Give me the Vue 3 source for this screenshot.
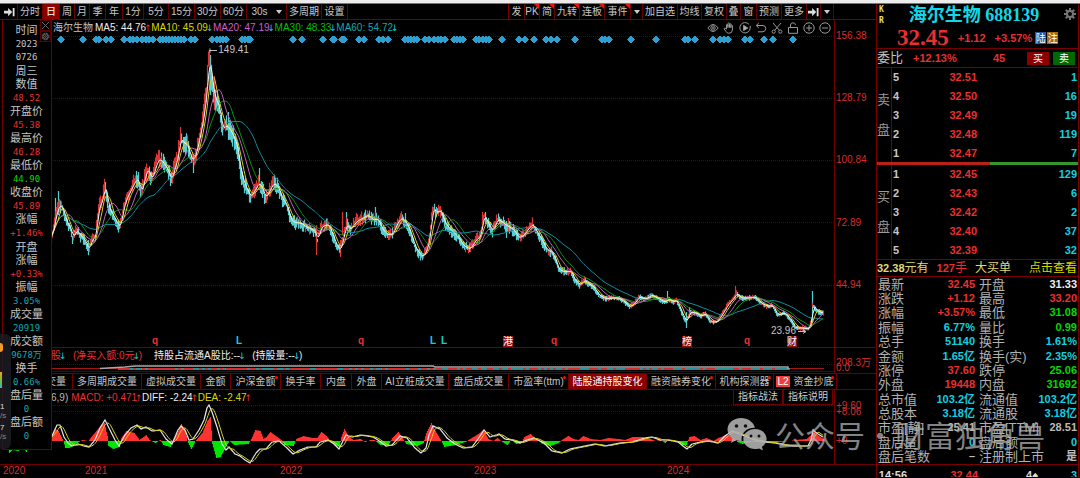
<script setup>
const X0 = 2
const SPAN = 832

const periods = [
  { t: '分时' }, { t: '日', on: true }, { t: '周' }, { t: '月' }, { t: '季' }, { t: '年' },
  { t: '1分' }, { t: '5分' }, { t: '15分' }, { t: '30分' }, { t: '60分' }, { t: '30s', caret: true },
  { t: '多周期' }, { t: '设置' },
]
const actions = [
  { t: '发' }, { t: 'PK', hot: true }, { t: '简', hot: true }, { t: '九转', hot: true },
  { t: '连板', hot: true }, { t: '事件', hot: true }, { t: '', caret: true }, { t: '加自选' },
  { t: '均线' }, { t: '复权' }, { t: '叠' }, { t: '窗' }, { t: '预测' }, { t: '更多' },
  { t: '', jump: true }, { t: '', caret: true },
]
const averages = [
  { t: 'MA5: 44.76', c: 'white', up: true }, { t: 'MA10: 45.09', c: 'yellow' },
  { t: 'MA20: 47.19', c: 'violet' }, { t: 'MA30: 48.33', c: 'green' }, { t: 'MA60: 54.72', c: 'teal' },
]
const tabs = [
  { t: '成交量' }, { t: '多周期成交量' }, { t: '虚拟成交量' }, { t: '金额' }, { t: '沪深金额', dot: true },
  { t: '换手率' }, { t: '内盘' }, { t: '外盘' }, { t: 'AI立桩成交量' }, { t: '盘后成交量' },
  { t: '市盈率(ttm)', dot: true }, { t: '陆股通持股变化', on: true }, { t: '融资融券变化', dot: true },
  { t: '机构探测器', dot: true }, { t: '资金抄底', dot: true, l2: true },
]
const side = [
  ['时间', ''], ['2023', 'n'], ['0726', 'n'], ['周三', ''], ['数值', ''], ['48.52', 'n red'],
  ['开盘价', ''], ['45.38', 'n red'], ['最高价', ''], ['46.28', 'n red'], ['最低价', ''], ['44.90', 'n lime'],
  ['收盘价', ''], ['45.89', 'n red'], ['涨幅', ''], ['+1.46%', 'n red'], ['开盘', ''], ['涨幅', ''],
  ['+0.33%', 'n red'], ['振幅', ''], ['3.05%', 'n teal'], ['成交量', ''], ['20919', 'n teal'],
  ['成交额', ''], ['9678万', 'n teal'], ['换手', ''], ['0.66%', 'n teal'], ['盘后量', ''], ['0', 'n teal'],
  ['盘后额', ''], ['0', 'n teal'],
]
const asks = [['5', '32.51', '1'], ['4', '32.50', '16'], ['3', '32.49', '19'], ['2', '32.48', '119'], ['1', '32.47', '7']]
const bids = [['1', '32.45', '129'], ['2', '32.43', '6'], ['3', '32.42', '2'], ['4', '32.40', '37'], ['5', '32.39', '32']]
const quote = [
  ['最新', '32.45', 'red', '开盘', '31.33', 'white'],
  ['涨跌', '+1.12', 'red', '最高', '33.20', 'red'],
  ['涨幅', '+3.57%', 'red', '最低', '31.08', 'lime'],
  ['振幅', '6.77%', 'cyan', '量比', '0.99', 'lime'],
  ['总手', '51140', 'cyan', '换手', '1.61%', 'cyan'],
  ['金额', '1.65亿', 'cyan', '换手(实)', '2.35%', 'cyan'],
  ['涨停', '37.60', 'red', '跌停', '25.06', 'lime'],
  ['外盘', '19448', 'red', '内盘', '31692', 'lime'],
  ['总市值', '103.2亿', 'cyan', '流通值', '103.2亿', 'cyan'],
  ['总股本', '3.18亿', 'cyan', '流通股', '3.18亿', 'cyan'],
  ['市盈[静]', '25.41', 'grey', '市盈[TTM]', '28.51', 'grey'],
  ['盘后量', '0', 'cyan', '盘后额', '0', 'cyan'],
  ['盘后笔数', '–', 'grey', '注册制上市', '是', 'grey'],
]
const marks = [
  [155, 'q', 'red'], [239, 'L', 'cyan'], [361, 'q', 'red'], [433, 'L', 'cyan'], [444, 'L', 'cyan'],
  [508, '港', 'tag'], [554, 'q', 'red'], [687, '榜', 'tag'], [747, 'q', 'red'], [792, '财', 'tag'],
]
const years = [[3, '2020'], [85, '2021'], [280, '2022'], [474, '2023'], [667, '2024']]
const priceLabels = [[36, '156.38'], [98, '128.79'], [160, '100.84'], [223, '72.89'], [285, '44.94']]

const pct = (x) => ((x - X0) / SPAN) * 100 + '%'

const pairs = (s) => s.trim().split(/\s+/).map((p) => p.split(',').map(Number))
const sample = (pts, from, to) => {
  const out = []
  let k = 0
  for (let x = from; x <= to; x++) {
    while (k < pts.length - 2 && pts[k + 1][0] < x) k++
    const [a, b] = pts[k]
    const [c, d] = pts[k + 1]
    const f = Math.min(1, Math.max(0, (x - a) / (c - a)))
    out.push([x, b + (d - b) * f])
  }
  return out
}
const smooth = (s, n) => s.map(([x], i) => {
  const w = s.slice(Math.max(0, i - n + 1), i + 1)
  return [x, w.reduce((t, p) => t + p[1], 0) / w.length]
})
const line = (s) => s.map((p) => p[0] + ',' + p[1].toFixed(1)).join(' ')

const closes = sample(pairs(`51,238 54,222 57,208 61,205 63,212 67,225 70,228 72,238 76,230 80,236 84,240
 88,250 91,240 95,236 97,215 99,205 102,200 104,185 106,193 108,208 112,215 116,222 119,228 122,212 125,200
 130,190 135,180 138,180 140,192 143,185 145,172 148,170 151,180 154,170 157,160 160,160 164,165 168,172
 171,181 173,170 176,162 180,138 183,143 187,145 190,158 193,160 196,150 200,132 203,115 206,90 208,65 209,58
 211,78 214,98 218,105 222,130 225,125 228,128 232,135 236,145 239,163 240,172 244,185 250,197 254,190 258,183
 261,187 265,198 270,188 273,183 278,188 281,198 286,205 290,220 295,223 300,223 305,227 310,229 314,231
 317,240 320,228 324,225 328,225 332,235 336,246 340,250 343,235 346,224 350,230 354,223 358,220 362,218
 367,215 372,220 377,219 382,230 387,235 392,234 397,222 401,218 405,222 409,230 414,246 418,253 422,257
 426,250 429,238 431,215 433,209 437,213 440,210 444,223 450,230 457,237 463,246 469,249 475,240 480,236
 482,220 484,216 488,225 492,231 497,219 502,223 508,227 513,230 518,238 523,235 528,228 532,224 536,232
 541,240 546,250 551,252 555,260 558,270 565,272 570,271 574,280 579,285 584,280 588,284 593,287 598,295
 605,299 610,298 618,298 625,303 629,307 634,303 638,297 645,299 651,295 658,299 664,302 668,299 673,302
 676,300 680,310 683,317 686,322 689,312 695,313 700,316 705,314 710,322 716,322 721,315 727,305 733,298
 736,293 740,298 748,298 754,297 760,303 766,306 772,306 777,315 784,313 790,320 795,328 802,328 808,329
 811,320 812,305 814,308 818,312 823,313`), 51, 823)

let seed = 7
const rnd = () => {
  seed = (seed * 16807) % 2147483647
  return seed / 2147483647
}
let rise = ''
let fall = ''
closes.forEach(([x, y], i) => {
  const amp = 2 + Math.max(0, 300 - y) * 0.055
  const slope = i ? y - closes[i - 1][1] : 0
  const bar = `M${x + 0.5} ${(y - amp * rnd() - 1).toFixed(1)}V${(y + amp * rnd() + 1).toFixed(1)}`
  if (slope + (rnd() - 0.5) * 2 < 0) rise += bar
  else fall += bar
})
rise += 'M209.5 50V90M104.5 182V200M145.5 167V180M180.5 127V150M214.5 76V110M316.5 225V255M340.5 240V257M342.5 212V235M356.5 213V225M259.5 181V190M482.5 212V230M735.5 286V300M161.5 156V165M508.5 218V232'
fall += 'M210.5 62V95M55.5 198V225M58.5 191V215M88.5 240V254M228.5 112V140M259.5 168V190M275.5 178V192M346.5 212V230M375.5 207V222M405.5 213V225M667.5 291V303M686.5 312V328M689.5 307V318M812.5 291V322M193.5 155V173M506.5 221V238'

const ma = [
  { c: '#0a8f9e', n: 48 }, { c: '#0a920a', n: 24 }, { c: '#bd62bd', n: 16 }, { c: '#d6cf20', n: 8 }, { c: '#f2f2f2', n: 4 },
].map((m) => ({ c: m.c, p: line(smooth(closes, m.n)) }))

const diffSeries = sample(pairs(`51,438 57,425 60,425 64,437 68,443 72,446 78,444 84,446 89,447 95,440 100,428
 105,420 110,430 115,440 119,446 125,435 131,428 137,425 141,429 146,427 152,431 160,430 166,439 172,444
 178,430 181,426 185,430 189,440 193,439 199,430 204,420 207,408 209,405 212,412 217,427 222,444 226,450
 229,447 235,454 240,456 245,460 250,463 256,453 260,449 266,449 272,442 279,441 287,448 293,454 300,450
 308,447 316,447 320,442 328,440 334,444 339,449 346,435 352,437 360,435 367,436 373,437 378,440 386,446
 392,445 400,436 407,438 415,448 421,453 426,448 429,435 433,426 440,429 447,438 455,444 463,448 472,447
 478,439 484,430 490,437 499,434 505,439 512,440 520,443 527,440 534,438 544,443 552,451 562,453 570,449
 585,446 595,444 605,446 620,443 632,442 645,438 652,437 660,440 668,440 678,442 683,446 687,449 692,444
 700,442 708,441 718,443 725,436 732,431 737,433 745,436 755,440 765,442 775,443 785,445 795,446 808,446
 811,440 813,430 818,434 823,437`), 51, 823)
const diff = line(diffSeries)
const dea = line(smooth(diffSeries, 7))

const histSeries = sample(pairs(`8,0 9,-12 12,-9 18,-10 22,-6 26,-11 28,-3 30,0 50,0 51,5 55,12 58,10 63,0 65,-7
 69,-7 75,-3 82,1 88,0 91,4 96,10 101,16 104,18 107,5 108,-5 113,-8 119,-6 121,3 126,10 134,8 139,1 146,6
 149,1 155,-2 160,1 163,-4 170,-6 174,3 178,10 181,17 185,10 187,0 191,-8 195,0 202,8 207,20 210,24 212,-3
 216,-17 220,-16 226,-5 229,0 234,-4 248,-3 251,2 255,11 260,10 263,2 266,4 270,9 274,6 281,1 284,-4 293,-5
 296,2 303,5 312,3 317,3 321,9 326,5 330,0 334,-4 339,-6 341,4 344,12 348,5 353,1 360,2 365,-1 370,1 374,1
 380,-4 388,-4 392,3 398,9 402,3 406,-3 417,-5 423,-2 426,8 431,18 435,10 441,0 444,-6 455,-4 465,-1 473,4
 478,7 483,11 488,2 493,0 497,3 502,-1 507,-4 511,1 516,-3 521,-2 524,4 530,7 536,2 542,-3 550,-5 558,-2
 563,2 568,5 573,2 578,1 583,5 590,2 600,1 608,3 618,2 625,1 632,4 642,4 650,2 655,0 660,1 665,-2 668,1
 675,0 682,-4 686,-4 689,4 694,5 700,1 706,3 713,0 718,3 726,6 732,4 737,-1 742,-3 750,-1 775,-1 790,0
 795,1 806,2 811,6 813,12 817,6 823,2`), 8, 823)
const bars = (sign) => histSeries.filter((p) => p[1] * sign > 0.3)
  .map((p) => `M${p[0] + 0.5} 441V${(441 - p[1]).toFixed(1)}`).join('')
const histUp = bars(1)
const histDown = bars(-1)

let flowRed = ''
let flowTeal = ''
for (let x = 118; x < 788; x += 3) {
  const s = `M${x} 369h3`
  if (rnd() > 0.45) flowRed += s
  else flowTeal += s
}

const diamonds = [61, 83, 96, 99, 106, 111, 124, 130, 133, 137, 142, 146, 149, 153, 160, 163, 166, 169, 172, 175,
  178, 181, 184, 191, 195, 212, 217, 220, 223, 226, 242, 245, 248, 250, 293, 302, 323, 333, 334, 342, 344, 359, 364,
  379, 383, 388, 405, 408, 411, 414, 417, 425, 429, 434, 438, 441, 445, 454, 457, 460, 463, 476, 479, 483, 486, 489,
  502, 519, 525, 534, 546, 551, 557, 575, 602, 605, 609, 631, 656, 685, 688, 695, 713, 720, 724, 728, 745, 750, 764,
  773, 793].map((x) => `M${x} 36l3.5 3.5l-3.5 3.5l-3.5 -3.5z`).join('')
</script>

<template>
  <div class="app">
    <div class="strip"></div>
    <div class="body">
      <main class="left">
        <nav class="toolbar">
          <div class="periods">
            <button class="tool" aria-label="展开">
              <svg class="jump" viewBox="0 0 12 10"><path d="M0 3.500h4.500V.5l4.500 4.500-4.500 4.500V6.500H0zM9.500 .5h2v9H9.500z" /></svg>
            </button>
            <button v-for="p in periods" :key="p.t" class="tool" :class="{ on: p.on }">
              {{ p.t }}<i v-if="p.caret" class="caret wide"></i>
            </button>
          </div>
          <div class="actions">
            <button v-for="(a, i) in actions" :key="i" class="tool" :class="{ hot: a.hot }">
              {{ a.t }}<i v-if="a.caret" class="caret"></i>
              <svg v-if="a.jump" class="jump" viewBox="0 0 12 10"><path d="M0 3.500h4.500V.5l4.500 4.500-4.500 4.500V6.500H0zM9.500 .5h2v9H9.500z" /></svg>
            </button>
          </div>
        </nav>

        <div class="work">
          <section class="band price">
            <div class="plot">
              <svg class="canvas" viewBox="2 20 832 327" preserveAspectRatio="none">
                <path d="M51 36.500H834M51 98.500H834M51 160.500H834M51 222.500H834M51 285.500H834" class="grid" />
                <path :d="diamonds" fill="#2f9fd0" stroke="#2f9fd0" stroke-linejoin="round" />
                <path :d="fall" stroke="#5fe4e8" stroke-width="1.200" stroke-opacity=".9" />
                <path :d="rise" stroke="#f23a3a" stroke-width="1.200" stroke-opacity=".9" />
                <polyline v-for="m in ma" :key="m.c" :points="m.p" :stroke="m.c" fill="none" />
                <path d="M209 50.500H217M210 48.500v4M798 331.500h8m-3 -2l3 2l-3 2" stroke="#bbb" fill="none" />
              </svg>
              <div class="legend">
                <span class="name">海尔生物</span>
                <span v-for="m in averages" :key="m.t" :class="m.c">{{ m.t }}<b class="arrow" :class="m.up ? 'red' : 'cyan'">{{ m.up ? '↑' : '↓' }}</b></span>
              </div>
              <div class="icons">
                <svg viewBox="0 0 12 12"><path d="M.8 6q5.200-7 10.400 0q-5.200 7-10.400 0z" /><circle cx="6" cy="6" r="2.200" /><circle cx="6" cy="6" r=".6" /></svg>
                <svg viewBox="0 0 12 12"><path d="M3.500 7V2.800q.7-1 1.400 0V5.500V1.500q.7-1 1.500 0V5.500V2q.7-1 1.500 0V5.800V3.500q.8-.9 1.500 0V8q-.2 3.300-3.500 3.300Q4 11.300 3 9.500L1 6.700q.3-1.100 1.400-.4z" /></svg>
                <svg viewBox="0 0 12 12"><path d="M9.800 2.200A5.200 5.200 0 1 0 11.200 6M11.200 6V3.800" /><path d="M4.600 3.400L8.800 6L4.600 8.600z" fill="#b0b0b0" /></svg>
                <svg viewBox="0 0 12 12"><path d="M3.800 1L1.200 3.500L3.800 6M1.200 3.500H8Q10.800 3.800 10.800 6.500T8 9.800H3" /></svg>
                <svg viewBox="0 0 12 12"><path d="M2 1L8.500 8.500M10 1L3.500 8.500" /><circle cx="2.700" cy="9.600" r="1.600" /><circle cx="9.300" cy="9.600" r="1.600" /></svg>
                <svg viewBox="0 0 12 12"><path d="M1.500 5.500H10.500V11.300H1.500zM3.500 5.500V3Q3.800.8 6 .8T8.500 3" /></svg>
                <svg viewBox="0 0 12 12"><circle cx="6" cy="6" r="5.200" /><path d="M3 6H9M6 3V9" /></svg>
                <svg viewBox="0 0 12 12"><circle cx="6" cy="6" r="5.200" /><path d="M3 6H9" /></svg>
              </div>
              <span class="note peak">149.41</span>
              <span class="note trough">23.96</span>
              <span v-for="m in marks" :key="m[0]" class="mark" :class="m[2]" :style="{ left: pct(m[0]) }">{{ m[1] }}</span>
            </div>
            <div class="axis">
              <span v-for="l in priceLabels" :key="l[1]" :style="{ top: l[0] - 20 + 'px' }">{{ l[1] }}</span>
            </div>
          </section>

          <section class="band flow">
            <div class="plot">
              <div class="caption">
                <span class="red">股<b class="cyan">↓</b></span>
                <span class="red net">(净买入额:0元<b class="cyan">↓</b>)</span>
                <span class="white">持股占流通A股比:--<b class="cyan">↓</b></span>
                <span class="white">(持股量:--<b class="cyan">↓</b>)</span>
              </div>
              <svg class="canvas" viewBox="2 348 832 25" preserveAspectRatio="none">
                <path d="M51 364.500H834" class="grid" />
                <path d="M51 368.500H118M788 368.500H824" stroke="#a51818" />
                <path :d="flowRed" stroke="#d03030" stroke-width="2" />
                <path :d="flowTeal" stroke="#2f8f96" stroke-width="2" />
                <path d="M100 368.500L125 367L135 366H433L435 367H788V369" stroke="#a9a9a9" stroke-width="1.500" fill="none" />
                <path d="M51 371.500H834" stroke="#5c0000" />
              </svg>
            </div>
            <div class="axis"><span class="flow-top">208.3万</span><span class="flow-zero">0.0</span></div>
          </section>

          <div class="tabs">
            <button v-for="t in tabs" :key="t.t" class="tab" :class="{ on: t.on, dot: t.dot }">
              <em v-if="t.l2">L2</em>{{ t.t }}
            </button>
          </div>

          <section class="band macd">
            <div class="plot">
              <svg class="canvas" viewBox="2 390 832 74" preserveAspectRatio="none">
                <path d="M51 405.500H834M51 411.500H834" class="grid" />
                <path :d="histUp" stroke="#ff3232" stroke-width="1.200" />
                <path :d="histDown" stroke="#00e600" stroke-width="1.200" />
                <polyline :points="diff" stroke="#e8e8e8" fill="none" stroke-width="1.200" />
                <polyline :points="dea" stroke="#d8d020" fill="none" />
              </svg>
              <div class="caption macd-text">
                <span class="grey">6,9)</span>
                <span class="red">MACD: +0.471<b class="arrow">↑</b></span>
                <span class="white">DIFF: -2.24<b class="arrow red">↑</b></span>
                <span class="yellow">DEA: -2.47<b class="arrow red">↑</b></span>
              </div>
              <div class="helpers"><button>指标战法</button><button>指标说明</button></div>
            </div>
            <div class="axis">
              <span class="m1">+9.60</span><span class="m2">+8.06</span><span class="m3">+0</span>
            </div>
          </section>

          <div class="years">
            <span v-for="y in years" :key="y[1]" :style="{ left: pct(y[0]) }">{{ y[1] }}</span>
          </div>

          <aside class="side">
            <span v-for="(s, i) in side" :key="i" :class="s[1]">{{ s[0] }}</span>
            <div class="side-tools">
              <button aria-label="关闭"><svg viewBox="0 0 10 10"><path d="M1 1L9 9M9 1L1 9" /></svg></button>
              <button aria-label="设置"><svg viewBox="0 0 10 10"><circle cx="5" cy="5" r="3.800" stroke-dasharray="2 1" /><circle cx="5" cy="5" r="2.800" /><circle cx="5" cy="5" r="1" /></svg></button>
            </div>
          </aside>
          <div class="dock">
            <i class="orange"></i><i class="rainbow"></i><span>1</span><span class="dim">/s</span><span>7</span><span class="dim">/s</span>
          </div>
        </div>
      </main>

      <aside class="panel">
        <header class="head">
          <div class="title-row">
            <div class="kr"><span>K</span><span>R</span></div>
            <h1>海尔生物 688139</h1>
            <button class="gear" aria-label="设置">
              <svg viewBox="0 0 12 12"><circle cx="6" cy="6" r="3" fill="none" stroke="#777" stroke-width="2" /><path d="M6 0v2.500M6 9.500V12M0 6h2.500M9.500 6H12M1.800 1.800l1.700 1.700M8.500 8.500l1.700 1.700M10.200 1.800L8.500 3.500M3.500 8.500l-1.700 1.700" stroke="#777" stroke-width="2" /></svg>
            </button>
          </div>
          <div class="last red"><strong>32.45</strong><b>+1.12</b><b>+3.57%</b><i class="chip blue">陆</i><i class="chip amber">注</i></div>
        </header>
        <div class="ratio">
          <span class="label">委比</span><b class="red">+12.13%</b><b class="red">45</b>
          <button class="buy">买</button><button class="sell">卖</button>
        </div>
        <div class="book">
          <div class="book-side"><span>卖</span><span>盘</span></div>
          <table><tbody><tr v-for="r in asks" :key="r[0]"><th>{{ r[0] }}</th><td class="red">{{ r[1] }}</td><td class="cyan">{{ r[2] }}</td></tr></tbody></table>
        </div>
        <div class="split"><i></i><i></i></div>
        <div class="book">
          <div class="book-side"><span>买</span><span>盘</span></div>
          <table><tbody><tr v-for="r in bids" :key="r[0]"><th>{{ r[0] }}</th><td class="red">{{ r[1] }}</td><td class="cyan">{{ r[2] }}</td></tr></tbody></table>
        </div>
        <div class="alert">
          <span><b>32.38</b>元有</span><span class="red"><b>127</b>手</span><span>大买单</span><a href="#">点击查看</a>
        </div>
        <table class="quote">
          <tbody>
            <tr v-for="q in quote" :key="q[0]">
              <th>{{ q[0] }}</th><td :class="q[2]">{{ q[1] }}</td><th>{{ q[3] }}</th><td :class="q[5]">{{ q[4] }}</td>
            </tr>
          </tbody>
        </table>
        <div class="ticks"><b>14:56</b><b class="red">32.44</b><b>4♠</b><b class="cyan">3</b></div>
      </aside>
    </div>

    <div class="watermark">
      <svg viewBox="0 0 40 34">
        <path d="M14 1C6.500 1 .5 6 .5 12.500c0 3.600 1.900 6.700 4.900 8.800L4 26l5-2.800c1.500.5 3 .7 4.700.7h1C13.500 16 20 10.500 28 10.800C26.500 5 21 1 14 1z" />
        <path d="M28 12c-6.600 0-11.700 4.400-11.700 10S21.400 32 28 32c1.400 0 2.800-.2 4-.6L36 33.500l-1.100-3.700C37.800 27.900 39.600 25 39.600 22c0-5.600-5-10-11.600-10z" />
        <g fill="#111"><circle cx="9.500" cy="9" r="1.800" /><circle cx="18.500" cy="9" r="1.800" /><circle cx="24" cy="19" r="1.500" /><circle cx="32" cy="19" r="1.500" /></g>
      </svg>
      <span>公众号</span><span class="point">·</span><span>财富独角兽</span>
    </div>
  </div>
</template>

<style>
body { margin: 0; background: #000; }
</style>

<style scoped>
.app { position: relative; overflow: hidden; background: #000; color: #c4c4c4; font: 10px/12px "Liberation Sans", "Noto Sans CJK SC", sans-serif; }
button { margin: 0; padding: 0; border: 0; background: none; color: inherit; font: inherit; white-space: nowrap; }
.strip { height: 3px; background: #ececec; border-bottom: 1px solid #777; }
.body { display: flex; }
.left { flex: 1; min-width: 0; }
.red { color: #e83030; }
.lime { color: #00d800; }
.green { color: #00c000; }
.cyan { color: #10d0e0; }
.teal { color: #10a8b0; }
.white { color: #eee; }
.grey { color: #bbb; }
.yellow { color: #d8d800; }
.violet { color: #c95fd0; }

.toolbar { display: flex; justify-content: space-between; height: 15px; padding: 0 42px 0 2px; border-bottom: 1px solid #780000; }
.periods, .actions { display: grid; }
.periods { grid-template-columns: 16px 25px 17px 15px 15px 16px 17px 21px 25px 26px 26px 26px 40px 35px 26px; }
.actions { grid-template-columns: 16px 15px 15px 25px 25px 26px 12px 35px 24px 25px 14px 16px 25px 25px 14px 13px; border-left: 1px solid #780000; }
.tool { position: relative; display: flex; align-items: center; justify-content: center; border-right: 1px solid #680000; color: #c8c8c8; }
.tool.on { background: #8c0000; color: #fff; }
.tool.hot::after { content: ""; position: absolute; top: 0; right: 0; border-top: 5px solid #f01010; border-left: 5px solid transparent; }
.caret { border: 3px solid transparent; border-top: 4px solid #ccc; border-bottom: 0; }
.caret.wide { margin-left: 8px; }
.jump { width: 11px; height: 10px; fill: #ddd; }

.work { position: relative; }
.band { display: grid; grid-template-columns: 1fr 42px; border-bottom: 1px solid #700000; }
.plot { position: relative; min-width: 0; margin-left: 2px; }
.canvas { display: block; width: 100%; height: 100%; }
.grid { stroke: #780000; stroke-dasharray: 1 1; stroke-opacity: .8; }
.axis { position: relative; border-left: 1px solid #700000; color: #d82c2c; }
.axis span { position: absolute; left: 1px; transform: translateY(-50%); white-space: nowrap; }
.price { height: 327px; }
.legend { position: absolute; top: 2px; left: 51px; display: flex; gap: 1px; white-space: nowrap; }
.legend .name { margin-right: 1px; }
.arrow { display: inline-block; width: 4px; font: 9px/10px "DejaVu Sans", sans-serif; text-indent: -2px; }
.icons { position: absolute; top: 2px; right: 3px; display: flex; gap: 4px; }
.icons svg { width: 12px; height: 12px; fill: none; stroke: #999; }
.note { position: absolute; color: #c4c4c4; }
.peak { left: 26%; top: 24px; }
.trough { right: 38px; bottom: 10px; }
.mark { position: absolute; bottom: 0; transform: translateX(-50%); font-weight: bold; }
.mark.tag { background: #8c1010; color: #fff; font-weight: normal; line-height: 11px; }

.flow { height: 25px; }
.flow .caption { position: absolute; top: 2px; left: 49px; display: flex; gap: 8px; white-space: nowrap; }
.net { margin-right: 4px; }
.flow .caption b { display: inline-block; width: 4px; font: 9px/10px "DejaVu Sans", sans-serif; text-indent: -2px; }
.axis .flow-top { top: 15px; }
.axis .flow-zero { top: 20px; }

.tabs { display: grid; grid-template-columns: 71px 69px 59px 30px 50px 40px 31px 30px 67px 60px 60px 78px 69px 58px 63px; height: 15px; margin-left: 2px; border-bottom: 1px solid #700000; }
.tab { position: relative; display: flex; align-items: center; justify-content: center; border-right: 1px solid #700000; }
.tab:first-child { justify-content: flex-end; padding-right: 6px; }
.tab.on { background: #8c0000; color: #fff; }
.tab.dot::after { content: ""; position: absolute; top: 2px; right: 2px; width: 3px; height: 3px; border-radius: 50%; background: #f01010; }
.tab em { margin-right: 4px; padding: 0 1px; background: #f03c3c; color: #fff; font-style: normal; line-height: 11px; }

.macd { height: 74px; }
.macd-text { position: absolute; top: 2px; left: 49px; display: flex; gap: 1px; white-space: nowrap; }
.macd-text .grey { margin-right: 2px; }
.helpers { position: absolute; top: 0; right: 1px; display: flex; }
.helpers button { width: 50px; height: 15px; border: 1px solid #700000; border-top: 0; color: #ccc; }
.axis .m1 { top: 16px; }
.axis .m2 { top: 22px; }
.axis .m3 { top: 51px; }
.years { position: relative; height: 13px; margin: 0 42px 0 2px; color: #d82c2c; }
.years span { position: absolute; top: 0; }

.side { position: absolute; top: 0; left: 2px; display: flex; flex-direction: column; justify-content: space-between; box-sizing: border-box; width: 50px; height: 430px; padding: 4px 1px 6px 0; border: 1px solid #700000; border-top: 0; background: #000; color: #c4c4c4; font-size: 11px; line-height: 13px; text-align: center; }
.side .n { font-family: "DejaVu Sans Mono", "Noto Sans CJK SC", monospace; font-size: 9px; }
.side-tools { position: absolute; top: 0; right: 0; display: flex; flex-direction: column; }
.side-tools button { display: flex; width: 11px; height: 11px; border: 1px solid #5a0000; box-sizing: border-box; }
.side-tools svg { width: 9px; height: 9px; fill: none; stroke: #777; }
.dock { position: absolute; top: 314px; left: 0; display: flex; flex-direction: column; box-sizing: border-box; width: 11px; height: 115px; border-radius: 0 6px 6px 0; background: rgba(28, 30, 36, .8); color: #ddd; font-size: 8px; line-height: 9px; }
.dock .orange { width: 3px; height: 9px; margin-top: 9px; border-radius: 0 3px 3px 0; background: #f79a20; }
.dock .rainbow { width: 2px; height: 16px; margin: 20px 0 14px; background: linear-gradient(#f0a030, #70c040, #40b0c0); }
.dock .dim { margin-bottom: 3px; color: #888; }

.panel { display: flex; flex-direction: column; box-sizing: border-box; width: 203px; margin-right: 1px; border: 1px solid #780000; border-width: 0 1px; font-size: 13px; line-height: 14px; }
.panel b { font-size: 11px; }
.head { box-sizing: border-box; height: 45px; border-bottom: 1px solid #780000; }
.title-row { display: flex; align-items: flex-start; justify-content: space-between; height: 23px; padding: 0 2px; }
.kr { display: flex; flex-direction: column; color: #e8e070; font: bold 8px/11px "DejaVu Sans Mono", monospace; }
h1 { margin: 0; color: #10d8e8; font: bold 18px/22px "Liberation Serif", "Noto Sans CJK SC", serif; }
.gear { width: 12px; height: 20px; }
.gear svg { display: block; width: 12px; height: 12px; }
.last { display: flex; align-items: center; gap: 9px; height: 21px; padding-left: 20px; }
.last strong { font: bold 23px/20px "Liberation Serif", serif; }
.chip { margin-left: -6px; width: 11px; color: #fff; font: normal 10px/12px "Noto Sans CJK SC", sans-serif; text-align: center; }
.blue { background: #2c54a0; }
.amber { margin-left: -8px; background: #a86a10; }
.ratio { display: grid; grid-template-columns: 32px 76px 1fr 22px 22px; gap: 4px; align-items: center; box-sizing: border-box; height: 19px; padding-right: 3px; border-bottom: 1px solid #780000; }
.ratio button { height: 13px; color: #fff; font-size: 10px; line-height: 13px; }
.buy { background: #8c0000; }
.sell { background: #006800; }
.book { display: flex; height: 94px; }
.book-side { display: flex; flex-direction: column; justify-content: center; gap: 16px; width: 14px; border-right: 1px solid #780000; color: #999; }
table { border-collapse: collapse; }
th, td { padding: 0; text-align: right; white-space: nowrap; }
.book table { flex: 1; font-size: 11px; font-weight: bold; }
.book th { width: 8px; padding-left: 1px; color: #c8c8c8; text-align: left; }
.book td:nth-child(2) { width: 76px; }
.book td:last-child { padding-right: 1px; }
.split { display: flex; height: 3px; }
.split i { flex: 113; background: #b82018; }
.split i + i { flex: 88; background: #30982c; }
.alert { display: flex; align-items: center; justify-content: space-between; box-sizing: border-box; height: 18px; border: 1px solid #780000; border-width: 1px 0; color: #e0d878; font-size: 12px; white-space: nowrap; }
.alert a { margin-left: 10px; padding-right: 1px; color: #d8d800; text-decoration: none; }
.quote { width: 100%; height: 187px; table-layout: fixed; line-height: 13px; }
.quote th { width: 53px; padding-left: 1px; color: #b0b0b0; font-weight: normal; text-align: left; }
.quote th:nth-child(3) { width: 56px; padding-left: 3px; }
.quote td { padding-right: 1px; font: bold 11px/13px "Liberation Sans", "Noto Sans CJK SC", sans-serif; }
.quote tr { height: 14px; }
.quote td:nth-child(2) { width: 44px; }
.ticks { display: grid; grid-template-columns: 29px 71px 60px 1fr; box-sizing: border-box; height: 13px; padding: 3px 1px 0; overflow: hidden; border-top: 1px solid #780000; color: #ddd; text-align: right; }

.watermark { position: absolute; right: 35px; bottom: 27px; display: flex; align-items: center; color: rgba(175, 175, 175, .75); font: 30px/34px "Noto Sans CJK SC", sans-serif; white-space: nowrap; }
.watermark svg { width: 40px; height: 34px; margin-right: 8px; fill: rgba(175, 175, 175, .9); }
.point { width: 30px; text-align: center; }
</style>
